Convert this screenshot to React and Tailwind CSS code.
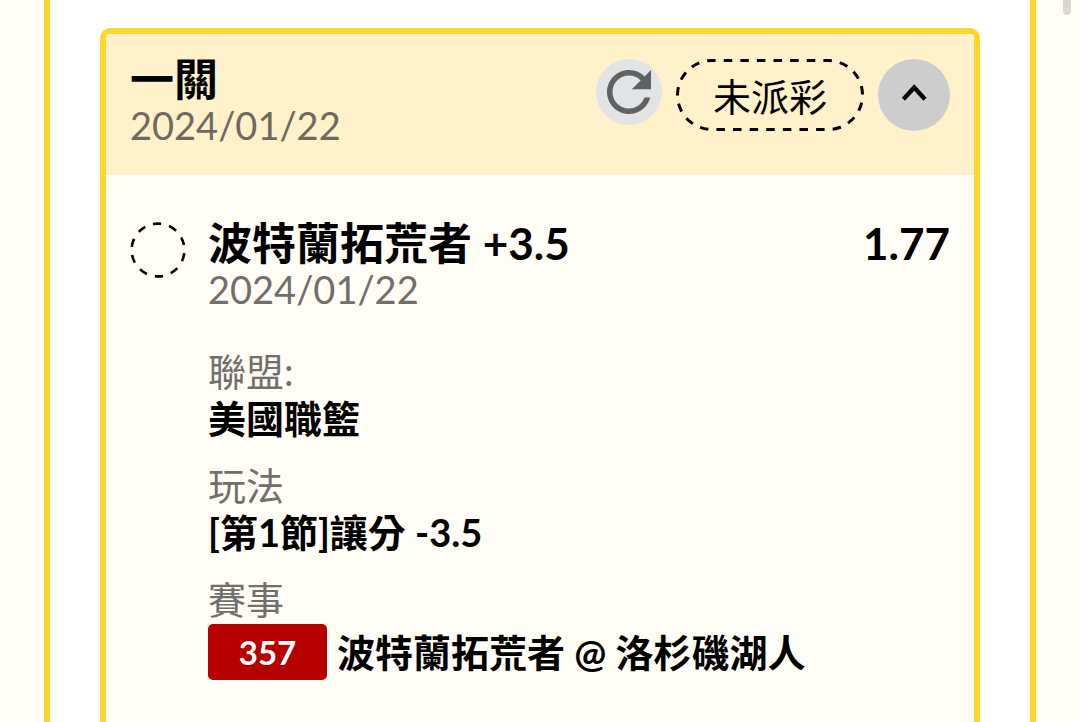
import React, { useState } from "react";

const bet = {
  title: "一關",
  date: "2024/01/22",
  status: "未派彩",
  pick: "波特蘭拓荒者 +3.5",
  pickDate: "2024/01/22",
  odds: "1.77",
  league: "美國職籃",
  play: "[第1節]讓分 -3.5",
  matchNo: "357",
  match: "波特蘭拓荒者 @ 洛杉磯湖人",
};

const RefreshIcon = () => (
  <svg viewBox="0 0 24 24" className="size-full" fill="#606163" aria-hidden="true">
    <path d="M17.65 6.35A7.958 7.958 0 0 0 12 4c-4.42 0-7.99 3.58-7.99 8s3.57 8 7.99 8c3.73 0 6.84-2.55 7.73-6h-2.08A5.99 5.99 0 0 1 12 18c-3.31 0-6-2.69-6-6s2.69-6 6-6c1.66 0 3.14.69 4.22 1.78L13 11h7V4l-2.35 2.35z" />
  </svg>
);

const ChevronIcon = ({ open }) => (
  <svg
    viewBox="0 0 72 72"
    className={open ? "size-full" : "size-full rotate-180"}
    fill="none"
    stroke="#000"
    strokeWidth="4.4"
    aria-hidden="true"
  >
    <path d="M25.4 40.2L36.2 28.6L47 40.2" />
  </svg>
);

// Dashed outline behind the status text
const PillOutline = () => (
  <svg
    viewBox="0 0 188 72"
    className="absolute inset-0 size-full"
    fill="none"
    stroke="#000"
    strokeWidth="3"
    aria-hidden="true"
  >
    <rect
      x="1.5"
      y="1.5"
      width="185"
      height="69"
      rx="34.5"
      pathLength="459"
      strokeDasharray="8.7 8.3"
      strokeDashoffset="5"
    />
  </svg>
);

const PendingIcon = () => (
  <svg
    viewBox="0 0 56 56"
    className="mt-[3px] size-14 shrink-0"
    fill="none"
    stroke="#000"
    strokeWidth="2.6"
    aria-hidden="true"
  >
    <circle
      cx="28"
      cy="28"
      r="26.4"
      pathLength="360"
      strokeDasharray="18 18"
      transform="rotate(-101 28 28)"
    />
  </svg>
);

const Field = ({ label, children }) => (
  <div>
    <dt className="text-[38px] leading-[44px] text-[#706f6b]">{label}</dt>
    <dd className="text-[38px] leading-[50px] font-bold">{children}</dd>
  </div>
);

const App = () => {
  const [open, setOpen] = useState(true);

  return (
    <div className="relative min-h-screen bg-[#fffdf5] px-11 font-['Lato','Noto_Sans_CJK_TC',sans-serif] text-black">
      {/* Scroll thumb */}
      <div className="absolute top-0 right-[9px] h-[15px] w-2 rounded-b-full bg-[#d9d8d2]" />

      <main className="min-h-screen border-x-6 border-[#ffd62b] bg-white px-[50px] pt-7">
        <section className="min-h-[calc(100vh-28px)] overflow-hidden rounded-t-[10px] border-6 border-b-0 border-[#ffd62b] bg-[#fffdf5]">
          {/* Header */}
          <header className="flex items-start justify-between bg-[#fff2cb] px-6 pt-[21px] pb-7">
            <div>
              <h2 className="text-[44px] leading-[48px] font-bold">{bet.title}</h2>
              <p className="text-[38px] leading-[44px] text-[#706a5a]">{bet.date}</p>
            </div>
            <div className="mt-1 flex items-start gap-[14px]">
              <button
                type="button"
                aria-label="refresh"
                className="size-[66px] rounded-full bg-[#e2e3e5]"
              >
                <RefreshIcon />
              </button>
              <div className="relative flex h-[72px] w-[188px] items-center justify-center pt-[2px] text-[38px]">
                <PillOutline />
                <span>{bet.status}</span>
              </div>
              <button
                type="button"
                aria-label="toggle"
                aria-expanded={open}
                onClick={() => setOpen(!open)}
                className="size-[72px] rounded-full bg-[#cdcdcd]"
              >
                <ChevronIcon open={open} />
              </button>
            </div>
          </header>

          {/* Bet details */}
          {open && (
            <div className="flex gap-[22px] px-6 pt-11">
              <PendingIcon />
              <div className="grow">
                <div className="flex justify-between text-[44px] leading-[48px] font-bold">
                  <h3>{bet.pick}</h3>
                  <span>{bet.odds}</span>
                </div>
                <p className="text-[38px] leading-[44px] text-[#706f6b]">{bet.pickDate}</p>

                <dl className="mt-[38px] flex flex-col gap-5">
                  <Field label="聯盟:">{bet.league}</Field>
                  <Field label="玩法">{bet.play}</Field>
                  <Field label="賽事">
                    <span className="flex items-center gap-[10px] pt-[3px]">
                      <span className="flex h-14 w-[119px] items-center justify-center rounded-[5px] bg-[#b60000] text-[33px] text-white">
                        {bet.matchNo}
                      </span>
                      {bet.match}
                    </span>
                  </Field>
                </dl>
              </div>
            </div>
          )}
        </section>
      </main>
    </div>
  );
};

export default App;
